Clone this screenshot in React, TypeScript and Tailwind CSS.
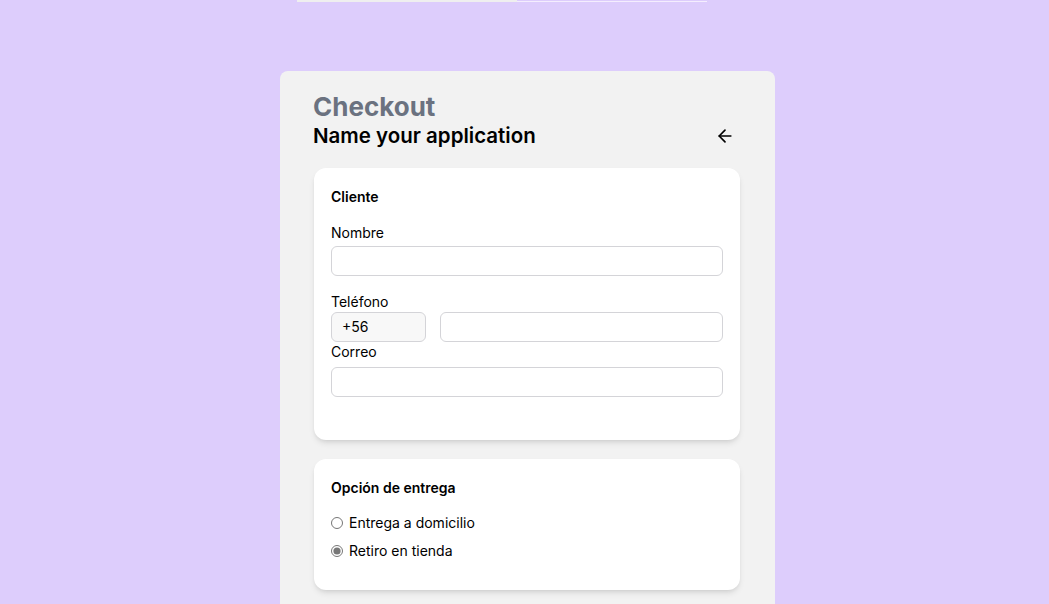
import { ArrowLeft } from "lucide-react"

const Field = ({ label, className = "" }: { label: string; className?: string }) => {
    return (
        <div className={className}>
            <label className="block text-sm leading-5 text-black">{label}</label>
            <input
                type="text"
                className="mt-[3px] block h-[30px] w-full rounded-md border border-[#d4d4d8] bg-white px-3 text-sm outline-none"
            />
        </div>
    )
}

export default function App() {
    return (
        <div
            className="min-h-screen bg-[#ddcdfc] text-black"
            style={{ fontFamily: "Inter, 'Noto Sans', sans-serif" }}
        >
            <div className="flex h-[2px]">
                <div className="ml-[297px] h-[2px] w-[220px] bg-[#efefef]" />
                <div className="mt-[1px] h-[1px] w-[190px] bg-[#f4eefe]" />
            </div>
            <div className="ml-[280px] mt-[69px] w-[495px] rounded-lg bg-[#f2f2f2] pb-10 pl-[33px] pr-[35px] pt-[20px]">
                <h1 className="text-[26px] font-bold leading-[31px] text-[#6b7280]">Checkout</h1>
                <div className="flex items-center justify-between">
                    <h2 className="text-[20.5px] font-semibold leading-7 text-black">Name your application</h2>
                    <button className="mr-[5px] flex h-5 w-5 items-center justify-center">
                        <ArrowLeft size={20} strokeWidth={2} />
                    </button>
                </div>

                <div className="ml-px mt-[18px] rounded-xl bg-white pb-[43px] pl-[17px] pr-[17px] pt-[19px] shadow-md">
                    <h3 className="text-sm font-semibold leading-5">Cliente</h3>
                    <Field label="Nombre" className="mt-[16px]" />
                    <div className="mt-4">
                        <label className="block text-sm leading-5">Teléfono</label>
                        <div className="flex gap-[14px]">
                            <div className="flex h-[30px] w-[95px] items-center rounded-md border border-[#d4d4d8] bg-[#f8f8f8] px-[10px] text-sm">
                                +56
                            </div>
                            <input
                                type="text"
                                className="h-[30px] flex-1 rounded-md border border-[#d4d4d8] bg-white px-3 text-sm outline-none"
                            />
                        </div>
                    </div>
                    <div>
                        <label className="block text-sm leading-5">Correo</label>
                        <input
                            type="text"
                            className="mt-[5px] block h-[30px] w-full rounded-md border border-[#d4d4d8] bg-white px-3 text-sm outline-none"
                        />
                    </div>
                </div>

                <div className="ml-px mt-[19px] rounded-xl bg-white pb-[29px] pl-[17px] pr-[17px] pt-[19px] shadow-md">
                    <h3 className="text-sm font-semibold leading-5">Opción de entrega</h3>
                    <div className="mt-[15px] flex flex-col gap-2">
                        <label className="flex items-center gap-[6px] text-sm leading-5">
                            <input type="radio" name="entrega" className="m-0 h-[12px] w-[12px] accent-[#777777]" />
                            Entrega a domicilio
                        </label>
                        <label className="flex items-center gap-[6px] text-sm leading-5">
                            <input
                                type="radio"
                                name="entrega"
                                defaultChecked
                                className="m-0 h-[12px] w-[12px] accent-[#777777]"
                            />
                            Retiro en tienda
                        </label>
                    </div>
                </div>
            </div>
        </div>
    )
}
